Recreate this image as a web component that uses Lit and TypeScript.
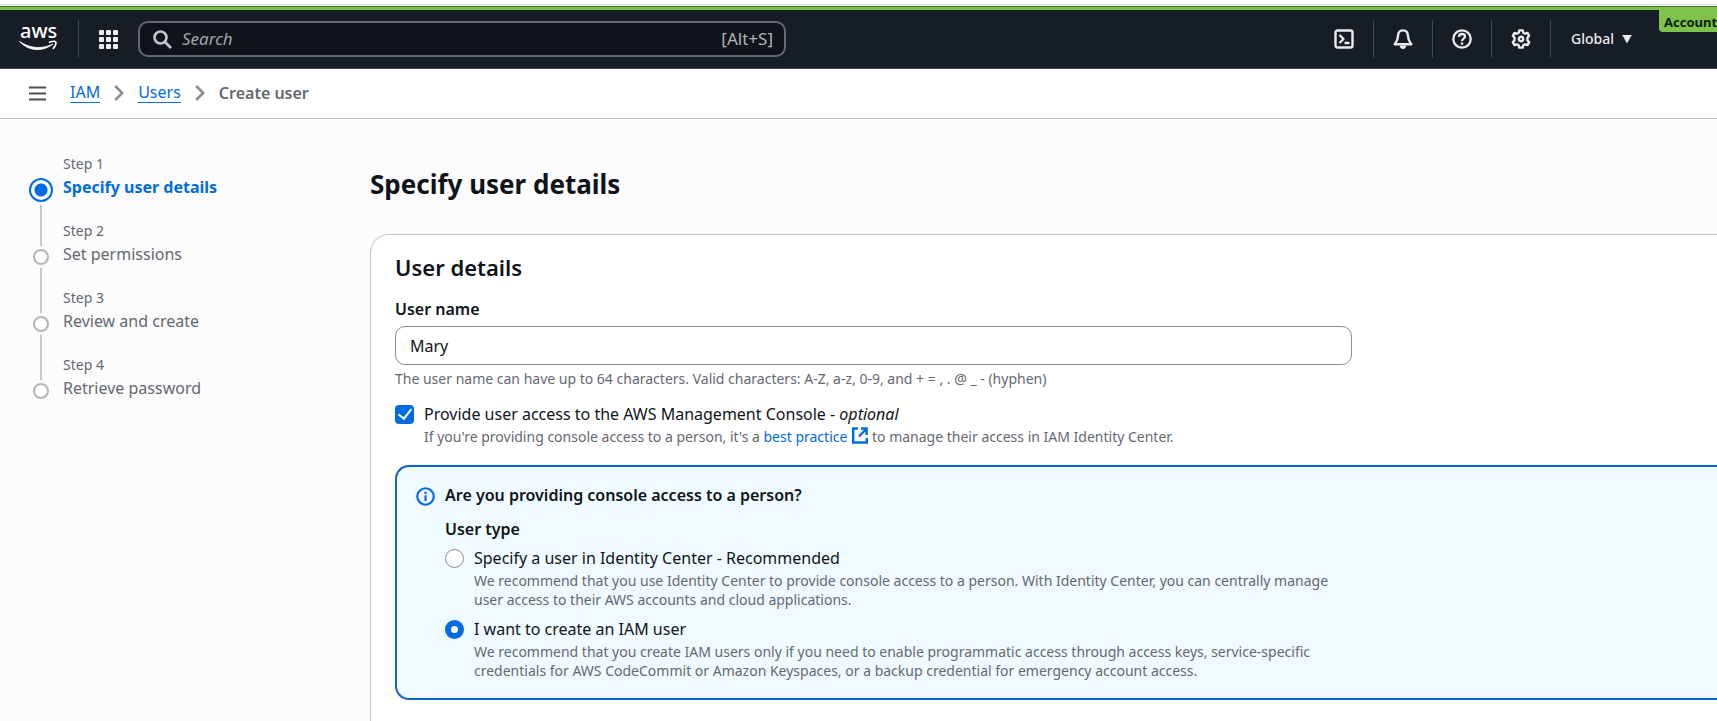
import { LitElement, html, css, svg } from 'lit';
import { customElement, property, state } from 'lit/decorators.js';
import { classMap } from 'lit/directives/class-map.js';

@customElement('console-header')
class ConsoleHeader extends LitElement {
  static styles = css`
    :host { display: block; position: relative; }
    * { box-sizing: border-box; }
    .strip { height: 6px; background: #fff; border-top: 4px solid #fff; }
    .strip::before { content: ''; display: block; height: 1px; background: #dcdcdc; }
    .accent { height: 4px; background: #7cc24b; border-top: 1px solid #3f6d1f; }
    .bar {
      display: flex; align-items: center; height: 59px;
      padding-right: 85px; background: #161d26; border-bottom: 1px solid #424650;
    }
    button { border: 0; padding: 0; margin: 0; background: none; color: inherit; font: inherit; cursor: pointer; }
    svg { display: block; }
    .logo {
      display: flex; flex: none; width: 78px; padding-left: 19px;
      align-items: center; color: #fff; text-decoration: none;
    }
    .logo text { font: 500 20px "Noto Sans", sans-serif; fill: #fff; }
    .cell {
      display: flex; flex: none; align-items: center; justify-content: center;
      width: 59px; height: 38px; color: #ebebf0; border-left: 1px solid #424650;
    }
    .cell.first { border-left-color: transparent; }
    .search {
      display: flex; align-items: center; flex: 0 1 648px; min-width: 0; height: 36px; margin-left: 1px;
      padding: 0 11px 0 13px; gap: 10px; color: #c6c6cd;
      background: #0f141a; border: 2px solid #656871; border-radius: 10px;
    }
    .search svg { flex: none; }
    .search input {
      flex: 1; min-width: 0; border: 0; outline: 0; padding: 0; background: none;
      color: #dedee3; font: 17px/24px "Noto Sans", sans-serif;
    }
    .search input::placeholder { color: #a4a4ad; opacity: 1; font-style: italic; }
    .hint { color: #b4b4bb; font-size: 17px; }
    .tools { display: flex; margin-left: auto; }
    .region {
      display: flex; align-items: center; gap: 8px; height: 38px; padding-left: 20px;
      border-left: 1px solid #424650; color: #ebebf0; font-size: 14px; font-weight: 500;
    }
    .tag {
      position: absolute; top: 9px; right: 0; width: 58px; height: 23px; padding-left: 5px;
      overflow: hidden; white-space: nowrap; background: #7cc24b; color: #0c2008;
      border-bottom-left-radius: 4px; font-size: 13px; line-height: 26px; font-weight: 700;
    }
  `;

  render() {
    return html`
      <div class="strip"></div>
      <div class="accent"></div>
      <header class="bar">
        <a class="logo" href="#" aria-label="AWS home">
          <svg width="44" height="48" viewBox="0 -6 44 48">
            <text x="1" y="17">aws</text>
            <path d="M.5 20.500C11 27.500 23 28.500 34 23C23 31.500 9.500 30 .5 20.500Z" fill="#fff" stroke="#fff" stroke-width=".8" stroke-linejoin="round"/>
            <path d="M30.500 21.300C33 20.300 36 20.200 36.800 21C37.400 22.200 36.300 25.300 34.300 27.300" fill="none" stroke="#fff" stroke-width="1.700" stroke-linecap="round" stroke-linejoin="round"/>
          </svg>
        </a>
        <button class="cell" aria-label="Services">
          <svg width="19" height="19" viewBox="0 0 19 19" fill="currentColor">
            ${[0, 7, 14].map(y => [0, 7, 14].map(x => svg`<rect x=${x} y=${y} width="5" height="5" rx="1"/>`))}
          </svg>
        </button>
        <label class="search">
          <svg width="19" height="19" viewBox="0 0 19 19" fill="none" stroke="currentColor" stroke-width="2.600">
            <circle cx="7.500" cy="7.500" r="6"/><path d="M12 12l6 6"/>
          </svg>
          <input type="search" placeholder="Search" aria-label="Search" />
          <span class="hint">[Alt+S]</span>
        </label>
        <div class="tools">
          <button class="cell first" aria-label="CloudShell">
            <svg width="20" height="20" viewBox="0 0 20 20" fill="none" stroke="currentColor" stroke-width="2.400" stroke-linejoin="round">
              <rect x="1.500" y="1.500" width="17" height="17" rx="2"/><path d="M5.500 6l4 4-4 4M10.500 14h5"/>
            </svg>
          </button>
          <button class="cell" aria-label="Notifications">
            <svg width="20" height="20" viewBox="0 0 20 20" fill="none" stroke="currentColor" stroke-width="2.400" stroke-linejoin="round">
              <path d="M10 1.400C6.500 1.400 5 3.800 5 7C5 11 3.800 12.600 1.700 15.300H18.300C16.200 12.600 15 11 15 7C15 3.800 13.500 1.400 10 1.400Z"/>
              <path d="M6.800 16.500h6.400c0 2-1.200 3.500-3.200 3.500s-3.200-1.500-3.200-3.500z" fill="currentColor" stroke="none"/>
            </svg>
          </button>
          <button class="cell" aria-label="Help">
            <svg width="20" height="20" viewBox="0 0 20 20" fill="none" stroke="currentColor" stroke-width="2.300">
              <circle cx="10" cy="10" r="8.700"/><path d="M7 8c0-1.900 1.300-3 3-3s3 1 3 2.600c0 2-3 2.300-3 4.600"/><path d="M10 13.500v2.300"/>
            </svg>
          </button>
          <button class="cell" aria-label="Settings">
            <svg width="20" height="20" viewBox="0 0 20 20" fill="none" stroke="currentColor" stroke-width="2.400" stroke-linejoin="round">
              <path d="M8.300 1.400h3.400l.6 2.300 1.800 1 2.400-.8 1.700 2.900-1.700 1.800v2.800l1.700 1.800-1.700 2.900-2.400-.8-1.800 1-.6 2.300H8.300l-.6-2.300-1.800-1-2.400.8-1.700-2.900 1.700-1.800V8.600L1.800 6.800l1.700-2.900 2.400.8 1.800-1z"/>
              <circle cx="10" cy="10" r="2.200"/>
            </svg>
          </button>
          <button class="region">
            Global
            <svg width="10" height="8" viewBox="0 0 10 8" fill="currentColor"><path d="M.5 0h9L5 8z" stroke="currentColor" stroke-width=".5"/></svg>
          </button>
        </div>
      </header>
      <div class="tag">Account</div>
    `;
  }
}

@customElement('step-nav')
class StepNav extends LitElement {
  static styles = css`
    :host { display: block; }
    ol { list-style: none; margin: 0; padding: 0; }
    li { display: flex; gap: 10px; height: 67px; color: #656871; }
    .rail { display: flex; flex-direction: column; align-items: center; flex: none; gap: 3px; width: 24px; }
    .line { width: 2px; height: 25px; background: #c6c6cd; }
    .line.below { flex: 1; height: auto; }
    .dot { box-sizing: border-box; flex: none; width: 16px; height: 16px; border: 2px solid #b4b4bb; border-radius: 50%; background: #fff; }
    .current .line.above { height: 21px; background: none; }
    .current .dot {
      width: 24px; height: 24px; border-color: #006ce0;
      background: radial-gradient(circle, #006ce0 0 6px, #fff 7px);
    }
    .last .below { visibility: hidden; }
    .num { font-size: 14px; line-height: 20px; }
    .title { display: block; color: inherit; text-decoration: none; font-size: 16px; line-height: 26px; }
    .current .title { color: #006ce0; font-weight: 700; }
  `;
  @property({ attribute: false }) steps: string[] = [];
  @property({ type: Number }) current = 0;

  render() {
    return html`<ol>
      ${this.steps.map((s, i) => html`
        <li class=${classMap({ current: i === this.current, last: i === this.steps.length - 1 })}>
          <div class="rail"><span class="line above"></span><span class="dot"></span><span class="line below"></span></div>
          <div><div class="num">Step ${i + 1}</div><a class="title" href="#">${s}</a></div>
        </li>`)}
    </ol>`;
  }
}

@customElement('app-root')
class AppRoot extends LitElement {
  static styles = css`
    :host {
      display: flex; flex-direction: column; min-height: 100vh; overflow-x: hidden;
      background: #fcfcfd; color: #0f141a; font: 16px/22px "Noto Sans", "Open Sans", sans-serif;
    }
    * { box-sizing: border-box; }
    svg { display: block; flex: none; }
    .crumbs {
      display: flex; align-items: center; height: 50px; padding: 0 29px; gap: 24px;
      background: #fff; border-bottom: 1px solid #c6c6cd;
    }
    .menu { border: 0; padding: 0; background: none; color: #4b4e57; cursor: pointer; }
    .crumbs ol { display: flex; align-items: center; gap: 14px; margin: 0; padding: 0 0 2px; list-style: none; color: #656871; }
    .crumbs li { display: flex; align-items: center; gap: 14px; line-height: 20px; }
    .crumbs li a { color: #006ce0; text-decoration: none; border-bottom: 1px solid #006ce0; }
    .crumbs .here { font-weight: 600; }
    .crumbs svg { color: #8c8c94; }
    .crumbs .menu svg { color: inherit; }
    .layout { display: flex; flex: 1; padding: 35px 0 0 29px; }
    step-nav { flex: 0 0 341px; }
    main { display: flex; flex-direction: column; flex: 1; min-width: 0; padding-top: 14px; }
    h1 { margin: 0 0 34px; font-size: 26px; line-height: 32px; font-weight: 700; }
    .card {
      flex: 1; padding: 18px 0 20px 24px; background: #fff;
      border: 1px solid #c6c6cd; border-width: 1px 0 0 1px; border-radius: 19px 0 0 0;
    }
    h2 { margin: 0 0 18px; font-size: 22px; line-height: 28px; font-weight: 600; }
    .field { max-width: 957px; margin-bottom: 15px; }
    .label { display: block; padding: 0; font-weight: 600; line-height: 20px; }
    .text {
      display: block; width: 100%; height: 39px; margin: 7px 0 4px; padding: 0 14px; color: inherit;
      font: inherit; background: #fff; border: 1px solid #8c8c94; border-radius: 10px;
    }
    .help { color: #656871; font-size: 14px; line-height: 19px; }
    .choice { display: grid; grid-template-columns: 19px 1fr; column-gap: 10px; row-gap: 2px; align-items: center; }
    .choice .help { grid-column: 2; max-width: 870px; }
    .help a { display: inline-flex; gap: 5px; color: #006ce0; text-decoration: none; }
    .mark {
      appearance: none; display: grid; place-items: center; width: 19px; height: 19px; margin: 0;
      background: #fff; border: 1px solid #8c8c94; border-radius: 50%;
    }
    .mark:checked { border: 6px solid #006ce0; }
    .mark.box { border-radius: 4px; }
    .mark.box:checked { border: 0; background: #006ce0; }
    .mark.box:checked::before {
      content: ''; width: 6px; height: 11px; margin-bottom: 3px;
      border: solid #fff; border-width: 0 2px 2px 0; transform: rotate(38deg);
    }
    .alert {
      display: flex; gap: 10px; margin-top: 19px; padding: 17px 19px 18px; background: #f0fbff;
      border: 2px solid #0a66c2; border-width: 2px 0 2px 2px; border-radius: 14px 0 0 14px;
    }
    .alert .icon { margin-top: 3px; color: #006ce0; }
    h3 { margin: 0 0 13px; font-size: 16px; line-height: 22px; font-weight: 600; }
    fieldset { border: 0; margin: 0; padding: 0; }
    .types { display: grid; gap: 9px; margin-top: 8px; }
  `;
  @state() private userType = 'iam';

  private types = [
    {
      id: 'center', title: 'Specify a user in Identity Center - Recommended',
      text: 'We recommend that you use Identity Center to provide console access to a person. With Identity Center, you can centrally manage user access to their AWS accounts and cloud applications.',
    },
    {
      id: 'iam', title: 'I want to create an IAM user',
      text: 'We recommend that you create IAM users only if you need to enable programmatic access through access keys, service-specific credentials for AWS CodeCommit or Amazon Keyspaces, or a backup credential for emergency account access.',
    },
  ];

  private chevron() {
    return html`<svg width="10" height="16" viewBox="0 0 10 16" fill="none" stroke="currentColor" stroke-width="2.600"><path d="M1.200 1l7 7-7 7"/></svg>`;
  }

  render() {
    return html`
      <console-header></console-header>
      <nav class="crumbs" aria-label="Breadcrumbs">
        <button class="menu" aria-label="Open navigation">
          <svg width="17" height="15" viewBox="0 0 17 15" fill="none" stroke="currentColor" stroke-width="2.200"><path d="M0 1.500h17M0 7.500h17M0 13.500h17"/></svg>
        </button>
        <ol>
          <li><a href="#">IAM</a>${this.chevron()}</li>
          <li><a href="#">Users</a>${this.chevron()}</li>
          <li class="here">Create user</li>
        </ol>
      </nav>
      <div class="layout">
        <step-nav .steps=${['Specify user details', 'Set permissions', 'Review and create', 'Retrieve password']}></step-nav>
        <main>
          <h1>Specify user details</h1>
          <section class="card">
            <h2>User details</h2>
            <div class="field">
              <label class="label" for="name">User name</label>
              <input class="text" id="name" type="text" .value=${'Mary'} />
              <div class="help">The user name can have up to 64 characters. Valid characters: A-Z, a-z, 0-9, and + = , . @ _ - (hyphen)</div>
            </div>
            <div class="choice">
              <input class="mark box" id="access" type="checkbox" checked />
              <label for="access">Provide user access to the AWS Management Console - <em>optional</em></label>
              <div class="help">
                If you're providing console access to a person, it's a
                <a href="#">best practice
                  <svg width="16" height="17" viewBox="0 0 16 17" fill="none" stroke="currentColor" stroke-width="2.400"><path d="M6 1.500H1.200v14h13.600V11M9 1.500h5.600V8M14.200 2L7 9.500"/></svg></a>
                to manage their access in IAM Identity Center.
              </div>
            </div>
            <div class="alert">
              <svg class="icon" width="19" height="19" viewBox="0 0 20 20" fill="none" stroke="currentColor" stroke-width="2.300">
                <circle cx="10" cy="10" r="8.700"/><path d="M10 8.800v5.900M10 5v2.300"/>
              </svg>
              <div>
                <h3>Are you providing console access to a person?</h3>
                <fieldset>
                  <legend class="label">User type</legend>
                  <div class="types">
                    ${this.types.map(t => html`
                      <div class="choice">
                        <input class="mark" type="radio" name="type" id=${t.id} .checked=${this.userType === t.id}
                          @change=${() => { this.userType = t.id; }} />
                        <label for=${t.id}>${t.title}</label>
                        <div class="help">${t.text}</div>
                      </div>`)}
                  </div>
                </fieldset>
              </div>
            </div>
          </section>
        </main>
      </div>
    `;
  }
}
